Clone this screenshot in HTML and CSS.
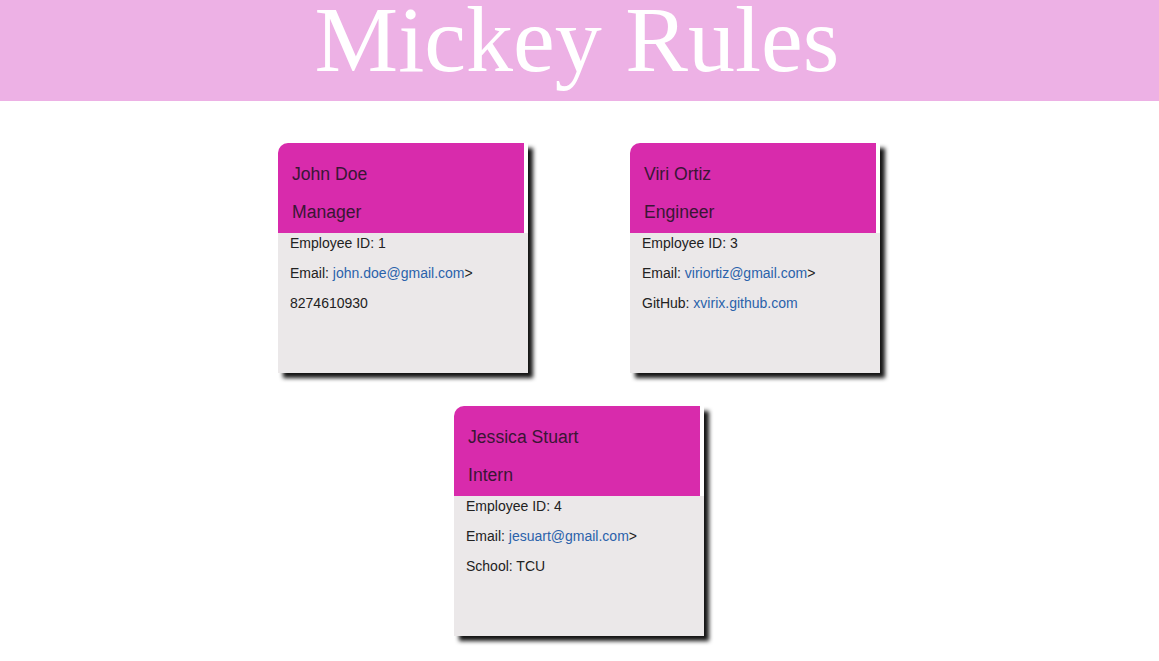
FILE: index.html
```html
<!DOCTYPE html>
<html lang="en">
<head>
<meta charset="utf-8">
<title>Mickey Rules</title>
<link rel="stylesheet" href="styles.css">
</head>
<body>
<header class="banner">
  <h1 class="title">Mickey Rules</h1>
</header>
<main class="team">
  <section class="card">
    <div class="card-head">
      <div class="name">John Doe</div>
      <div class="role">Manager</div>
    </div>
    <div class="card-body">
      <div class="line">Employee ID: 1</div>
      <div class="line">Email: <a class="link" href="#">john.doe@gmail.com</a>&gt;</div>
      <div class="line">8274610930</div>
    </div>
  </section>
  <section class="card">
    <div class="card-head">
      <div class="name">Viri Ortiz</div>
      <div class="role">Engineer</div>
    </div>
    <div class="card-body">
      <div class="line">Employee ID: 3</div>
      <div class="line">Email: <a class="link" href="#">viriortiz@gmail.com</a>&gt;</div>
      <div class="line">GitHub: <a class="link" href="#">xvirix.github.com</a></div>
    </div>
  </section>
  <section class="card">
    <div class="card-head">
      <div class="name">Jessica Stuart</div>
      <div class="role">Intern</div>
    </div>
    <div class="card-body">
      <div class="line">Employee ID: 4</div>
      <div class="line">Email: <a class="link" href="#">jesuart@gmail.com</a>&gt;</div>
      <div class="line">School: TCU</div>
    </div>
  </section>
</main>
</body>
</html>
```

FILE: styles.css
```css
html, body {
  margin: 0;
  padding: 0;
  background: #ffffff;
}

body {
  font-family: "Liberation Sans", Arial, sans-serif;
  color: #222222;
}

.banner {
  background: #edb1e5;
  height: 101px;
  box-sizing: border-box;
  padding-top: 4px;
  padding-right: 5px;
  display: flex;
  justify-content: center;
}

.title {
  margin: 0;
  font-family: "Liberation Serif", "Times New Roman", serif;
  font-weight: normal;
  font-size: 94px;
  line-height: 70px;
  color: #ffffff;
  text-align: center;
}

.team {
  max-width: 603px;
  margin: 0 auto;
  padding: 42px 1px 30px 0;
  display: flex;
  flex-wrap: wrap;
  justify-content: center;
  column-gap: 102px;
  row-gap: 33px;
}

.card {
  width: 250px;
  height: 230px;
  display: flex;
  flex-direction: column;
  box-shadow: 5px 5px 4px rgba(0, 0, 0, 0.92);
  border-top-left-radius: 10px;
}

.card-head {
  width: 246px;
  height: 90px;
  box-sizing: border-box;
  padding: 12px 0 0 14px;
  background: #d82bac;
  border-top-left-radius: 10px;
  color: #3a1635;
  font-size: 17.6px;
}

.name, .role {
  line-height: 38px;
}

.card-body {
  flex: 1;
  background: #ebe8e9;
  padding: 0 0 0 12px;
  font-size: 14px;
  display: flex;
  flex-direction: column;
  gap: 10px;
}

.line {
  line-height: 20px;
}

.link {
  color: #2a62ab;
  text-decoration: none;
}
```
